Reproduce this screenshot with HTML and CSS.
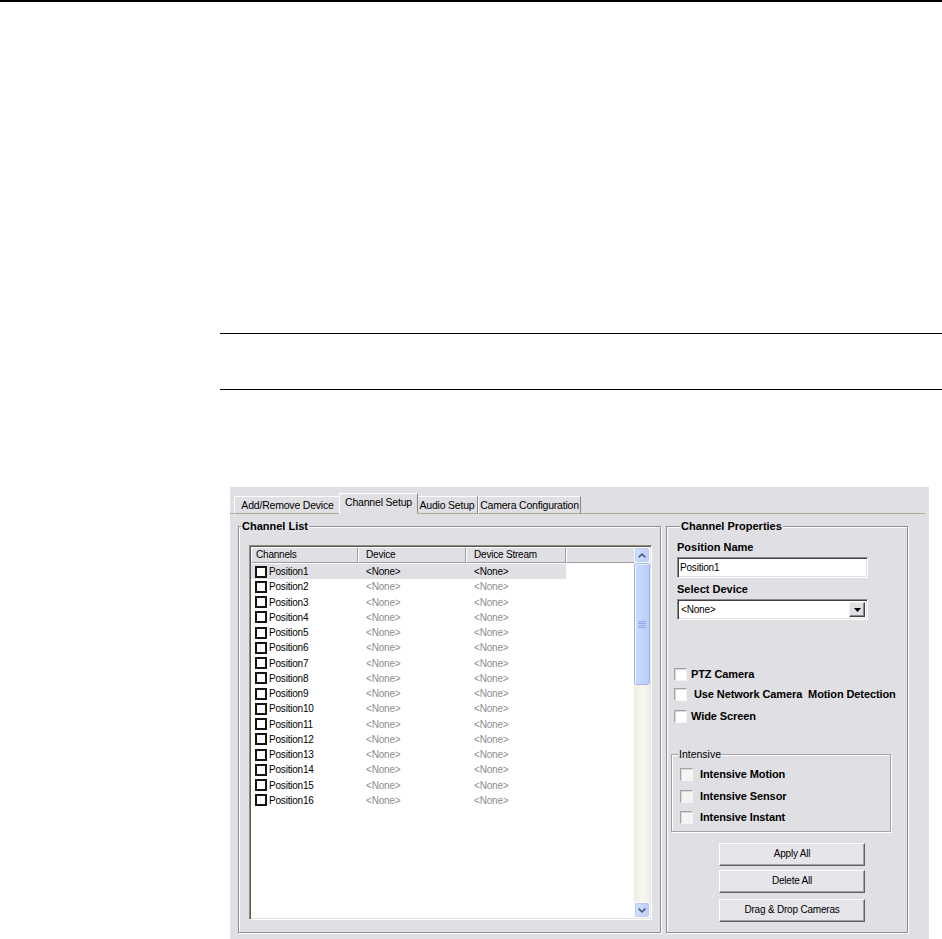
FILE: index.html
```html
<!DOCTYPE html>
<html>
<head>
<meta charset="utf-8">
<link rel="stylesheet" href="styles.css">
</head>
<body>
<div class="topline"></div>
<div class="note"></div>
<div class="dialog">
  <div class="tabstrip">
    <div class="tab t1">Add/Remove Device</div>
    <div class="tab t2 active">Channel Setup</div>
    <div class="tab t3">Audio Setup</div>
    <div class="tab t4">Camera Configuration</div>
  </div>
  <div class="panes">
    <div class="group list-group">
      <span class="group-title gt-list">Channel List</span>
      <div class="listview">
        <div class="lv-main">
          <div class="lv-header">
            <div class="hcell c1">Channels</div>
            <div class="hcell c2">Device</div>
            <div class="hcell c3">Device Stream</div>
            <div class="hcell filler"></div>
          </div>
          <div class="lv-rows">
            <div class="row selected"><div class="cell c1"><span class="lbox"></span><span class="pos">Position1</span></div><div class="cell c2">&lt;None&gt;</div><div class="cell c3">&lt;None&gt;</div></div>
            <div class="row"><div class="cell c1"><span class="lbox"></span><span class="pos">Position2</span></div><div class="cell c2 dim">&lt;None&gt;</div><div class="cell c3 dim">&lt;None&gt;</div></div>
            <div class="row"><div class="cell c1"><span class="lbox"></span><span class="pos">Position3</span></div><div class="cell c2 dim">&lt;None&gt;</div><div class="cell c3 dim">&lt;None&gt;</div></div>
            <div class="row"><div class="cell c1"><span class="lbox"></span><span class="pos">Position4</span></div><div class="cell c2 dim">&lt;None&gt;</div><div class="cell c3 dim">&lt;None&gt;</div></div>
            <div class="row"><div class="cell c1"><span class="lbox"></span><span class="pos">Position5</span></div><div class="cell c2 dim">&lt;None&gt;</div><div class="cell c3 dim">&lt;None&gt;</div></div>
            <div class="row"><div class="cell c1"><span class="lbox"></span><span class="pos">Position6</span></div><div class="cell c2 dim">&lt;None&gt;</div><div class="cell c3 dim">&lt;None&gt;</div></div>
            <div class="row"><div class="cell c1"><span class="lbox"></span><span class="pos">Position7</span></div><div class="cell c2 dim">&lt;None&gt;</div><div class="cell c3 dim">&lt;None&gt;</div></div>
            <div class="row"><div class="cell c1"><span class="lbox"></span><span class="pos">Position8</span></div><div class="cell c2 dim">&lt;None&gt;</div><div class="cell c3 dim">&lt;None&gt;</div></div>
            <div class="row"><div class="cell c1"><span class="lbox"></span><span class="pos">Position9</span></div><div class="cell c2 dim">&lt;None&gt;</div><div class="cell c3 dim">&lt;None&gt;</div></div>
            <div class="row"><div class="cell c1"><span class="lbox"></span><span class="pos">Position10</span></div><div class="cell c2 dim">&lt;None&gt;</div><div class="cell c3 dim">&lt;None&gt;</div></div>
            <div class="row"><div class="cell c1"><span class="lbox"></span><span class="pos">Position11</span></div><div class="cell c2 dim">&lt;None&gt;</div><div class="cell c3 dim">&lt;None&gt;</div></div>
            <div class="row"><div class="cell c1"><span class="lbox"></span><span class="pos">Position12</span></div><div class="cell c2 dim">&lt;None&gt;</div><div class="cell c3 dim">&lt;None&gt;</div></div>
            <div class="row"><div class="cell c1"><span class="lbox"></span><span class="pos">Position13</span></div><div class="cell c2 dim">&lt;None&gt;</div><div class="cell c3 dim">&lt;None&gt;</div></div>
            <div class="row"><div class="cell c1"><span class="lbox"></span><span class="pos">Position14</span></div><div class="cell c2 dim">&lt;None&gt;</div><div class="cell c3 dim">&lt;None&gt;</div></div>
            <div class="row"><div class="cell c1"><span class="lbox"></span><span class="pos">Position15</span></div><div class="cell c2 dim">&lt;None&gt;</div><div class="cell c3 dim">&lt;None&gt;</div></div>
            <div class="row"><div class="cell c1"><span class="lbox"></span><span class="pos">Position16</span></div><div class="cell c2 dim">&lt;None&gt;</div><div class="cell c3 dim">&lt;None&gt;</div></div>
          </div>
        </div>
        <div class="vscroll">
          <div class="sb-btn"><svg width="8" height="5" viewBox="0 0 8 5"><path d="M0.6 4.4 L4 1.1 L7.4 4.4" fill="none" stroke="#4d6185" stroke-width="1.6"/></svg></div>
          <div class="sb-thumb"><svg width="8" height="7" viewBox="0 0 8 7"><path d="M0 0.5H8M0 2.5H8M0 4.5H8M0 6.5H8" stroke="#8ea8e8" stroke-width="1"/></svg></div>
          <div class="sb-space"></div>
          <div class="sb-btn"><svg width="8" height="5" viewBox="0 0 8 5"><path d="M0.6 0.6 L4 3.9 L7.4 0.6" fill="none" stroke="#4d6185" stroke-width="1.6"/></svg></div>
        </div>
      </div>
    </div>
    <div class="group props-group">
      <span class="group-title gt-props">Channel Properties</span>
      <div class="field-label first">Position Name</div>
      <div class="textbox">Position1</div>
      <div class="field-label">Select Device</div>
      <div class="selectbox">
        <span class="sel-text">&lt;None&gt;</span>
        <span class="sel-btn"><svg width="7" height="4" viewBox="0 0 7 4"><path d="M0 0H7L3.5 4Z" fill="#000"/></svg></span>
      </div>
      <div class="chk-row r-ptz"><span class="xbox"></span><span class="chk-text">PTZ Camera</span></div>
      <div class="chk-row r-net"><span class="xbox"></span><span class="chk-text">&nbsp;Use Network Camera&nbsp; Motion Detection</span></div>
      <div class="chk-row r-wide"><span class="xbox"></span><span class="chk-text">Wide Screen</span></div>
      <div class="group intensive">
        <span class="group-title gt-int">Intensive</span>
        <div class="chk-row i1"><span class="xbox disabled"></span><span class="chk-text">Intensive Motion</span></div>
        <div class="chk-row i2"><span class="xbox disabled"></span><span class="chk-text">Intensive Sensor</span></div>
        <div class="chk-row i3"><span class="xbox disabled"></span><span class="chk-text">Intensive Instant</span></div>
      </div>
      <div class="btn b1">Apply All</div>
      <div class="btn b2">Delete All</div>
      <div class="btn b3">Drag &amp; Drop Cameras</div>
    </div>
  </div>
</div>
</body>
</html>
```
FILE: styles.css
```css
* { box-sizing: border-box; }
body {
  margin: 0;
  background: #fff;
  font-family: "Liberation Sans", Arial, sans-serif;
  font-size: 11px;
  color: #000;
}
.topline { height: 2px; background: #000; }
.note {
  margin: 331px 0 0 220px;
  height: 57px;
  border-top: 1px solid #000;
  border-bottom: 1px solid #000;
}
.dialog {
  margin: 97px 0 0 230px;
  width: 699px;
  height: 452px;
  background: #e0dfe3;
  font-size: 10px;
  letter-spacing: -0.2px;
}
/* tabs */
.tabstrip {
  display: flex;
  align-items: flex-end;
  height: 27px;
  padding-left: 4px;
  margin-right: 4px;
  border-bottom: 1px solid #aca899;
}
.tab {
  height: 18px;
  margin-bottom: -1px;
  border-top: 1px solid #fff;
  border-left: 1px solid #fff;
  border-right: 1px solid #8a8a8a;
  border-bottom: 1px solid #aca899;
  line-height: 17px;
  text-align: center;
  white-space: nowrap;
  background: #e0dfe3;
  font-size: 10.5px;
}
.t1 { width: 107px; }
.t2 { width: 79px; margin-left: -2px; margin-right: -2px; }
.t3 { width: 62px; }
.t4 { width: 103px; }
.tab.active {
  position: relative;
  z-index: 1;
  height: 21px;
  border-bottom-color: #e0dfe3;
  line-height: 16px;
}
/* groups */
.panes {
  display: flex;
  margin-top: 12px;
  padding-left: 8px;
}
.group {
  position: relative;
  border: 1px solid #8f8f93;
  box-shadow: inset 1px 1px 0 #fff, 1px 1px 0 #fff;
  height: 407px;
}
.group-title {
  position: absolute;
  top: -7px;
  line-height: 13px;
  padding: 0 1px;
  background: #e0dfe3;
  font-weight: bold;
  font-size: 11px;
  letter-spacing: 0;
  white-space: nowrap;
}
.gt-list { left: 2px; }
.gt-props { left: 13px; }
.gt-int { left: 6px; font-weight: normal; font-size: 10.5px; }
.list-group { width: 423px; }
.props-group { width: 242px; margin-left: 5px; }
/* list view */
.listview {
  display: flex;
  margin: 18px 0 0 10px;
  width: 403px;
  height: 375px;
  padding: 1px;
  border: 1px solid;
  border-color: #8e8d86 #fff #fff #8e8d86;
  background: #fff;
  box-shadow: inset 1px 1px 0 #5a5a52, inset -1px -1px 0 #e4e3dc;
}
.lv-main { flex: 1; overflow: hidden; }
.lv-header { display: flex; height: 16px; }
.hcell {
  height: 16px;
  border-top: 1px solid #fff;
  border-left: 1px solid #fff;
  border-right: 1px solid #9d9da1;
  border-bottom: 1px solid #9d9da1;
  background: #e0dfe3;
  line-height: 14px;
  white-space: nowrap;
}
.hcell.c1 { width: 107px; padding-left: 4px; }
.hcell.c2 { width: 108px; padding-left: 7px; }
.hcell.c3 { width: 100px; padding-left: 7px; }
.hcell.filler { flex: 1; border-right: none; }
.row {
  display: flex;
  align-items: center;
  width: 315px;
  height: 15.25px;
  white-space: nowrap;
}
.lv-rows { padding-top: 1px; }
.row.selected { background: #e0dfe3; }
.cell.c1 { width: 107px; display: flex; align-items: center; padding-left: 4px; }
.cell.c2 { width: 108px; padding-left: 8px; }
.cell.c3 { width: 100px; padding-left: 8px; }
.dim { color: #8c8c8c; }
.lbox {
  width: 12px;
  height: 12px;
  border: 2px solid #141414;
  background: #fff;
  flex: none;
}
.pos { margin-left: 2px; }
/* scrollbar */
.vscroll {
  width: 16px;
  height: 100%;
  display: flex;
  flex-direction: column;
  background: linear-gradient(to right, #eeede5, #f8f7f3 50%, #f1efe8);
}
.sb-btn {
  height: 16px;
  border: 1px solid #fff;
  border-radius: 3px;
  background: linear-gradient(to right, #d3e0fd, #bccefa);
  box-shadow: inset 0 0 0 1px #b6c9f5;
  display: flex;
  align-items: center;
  justify-content: center;
}
.sb-thumb {
  height: 122px;
  border: 1px solid #9fb6ec;
  border-radius: 3px;
  background: linear-gradient(to right, #cddbfd, #b9ccfa);
  box-shadow: inset 1px 1px 0 #eef3fe;
  display: flex;
  align-items: center;
  justify-content: center;
}
.sb-space { flex: 1; }
/* properties */
.field-label {
  margin: 5px 0 0 10px;
  font-weight: bold;
  font-size: 11px;
  letter-spacing: 0;
  line-height: 13px;
}
.field-label.first { margin-top: 14px; }
.textbox, .selectbox {
  margin: 3px 0 0 10px;
  width: 191px;
  height: 21px;
  border: 1px solid;
  border-color: #8a8a8a #fff #fff #8a8a8a;
  box-shadow: inset 1px 1px 0 #404040, inset -1px -1px 0 #e3e3e3;
  background: #fff;
  padding-left: 2px;
  line-height: 19px;
  white-space: nowrap;
}
.selectbox {
  display: flex;
  align-items: center;
  padding: 2px;
}
.sel-text { flex: 1; line-height: 15px; padding-left: 1px; }
.sel-btn {
  width: 16px;
  height: 15px;
  border: 1px solid;
  border-color: #f4f4f4 #404040 #404040 #f4f4f4;
  box-shadow: inset -1px -1px 0 #8a8a8a;
  background: #e0dfe3;
  display: flex;
  align-items: center;
  justify-content: center;
}
.chk-row {
  display: flex;
  align-items: center;
  height: 16px;
  margin-left: 7px;
  white-space: nowrap;
}
.r-ptz { margin-top: 46px; }
.r-net { margin-top: 4px; }
.r-wide { margin-top: 6px; }
.xbox {
  width: 13px;
  height: 13px;
  flex: none;
  border: 1px solid;
  border-color: #a3a3a3 #f4f4f4 #f4f4f4 #a3a3a3;
  background: #fff;
  box-shadow: inset 1px 1px 0 #d9d9d9;
}
.xbox.disabled { background: #f4f4f2; }
.chk-text { margin-left: 4px; font-weight: bold; font-size: 11px; letter-spacing: -0.1px; }
.intensive {
  margin: 30px 0 0 4px;
  width: 220px;
  height: 78px;
  border-color: #a3a3a6;
}
.intensive .chk-row { margin-left: 8px; }
.intensive .chk-text { margin-left: 7px; }
.i1 { margin-top: 11px; }
.i2 { margin-top: 6px; }
.i3 { margin-top: 5px; }
.btn {
  margin-left: 52px;
  width: 146px;
  height: 23px;
  border: 1px solid;
  border-color: #fff #5f5f5f #5f5f5f #fff;
  box-shadow: inset -1px -1px 0 #a3a3a3;
  background: #e6e5e9;
  text-align: center;
  line-height: 20px;
  white-space: nowrap;
}
.b1 { margin-top: 11px; }
.b2 { margin-top: 4px; }
.b3 { margin-top: 6px; }
```
